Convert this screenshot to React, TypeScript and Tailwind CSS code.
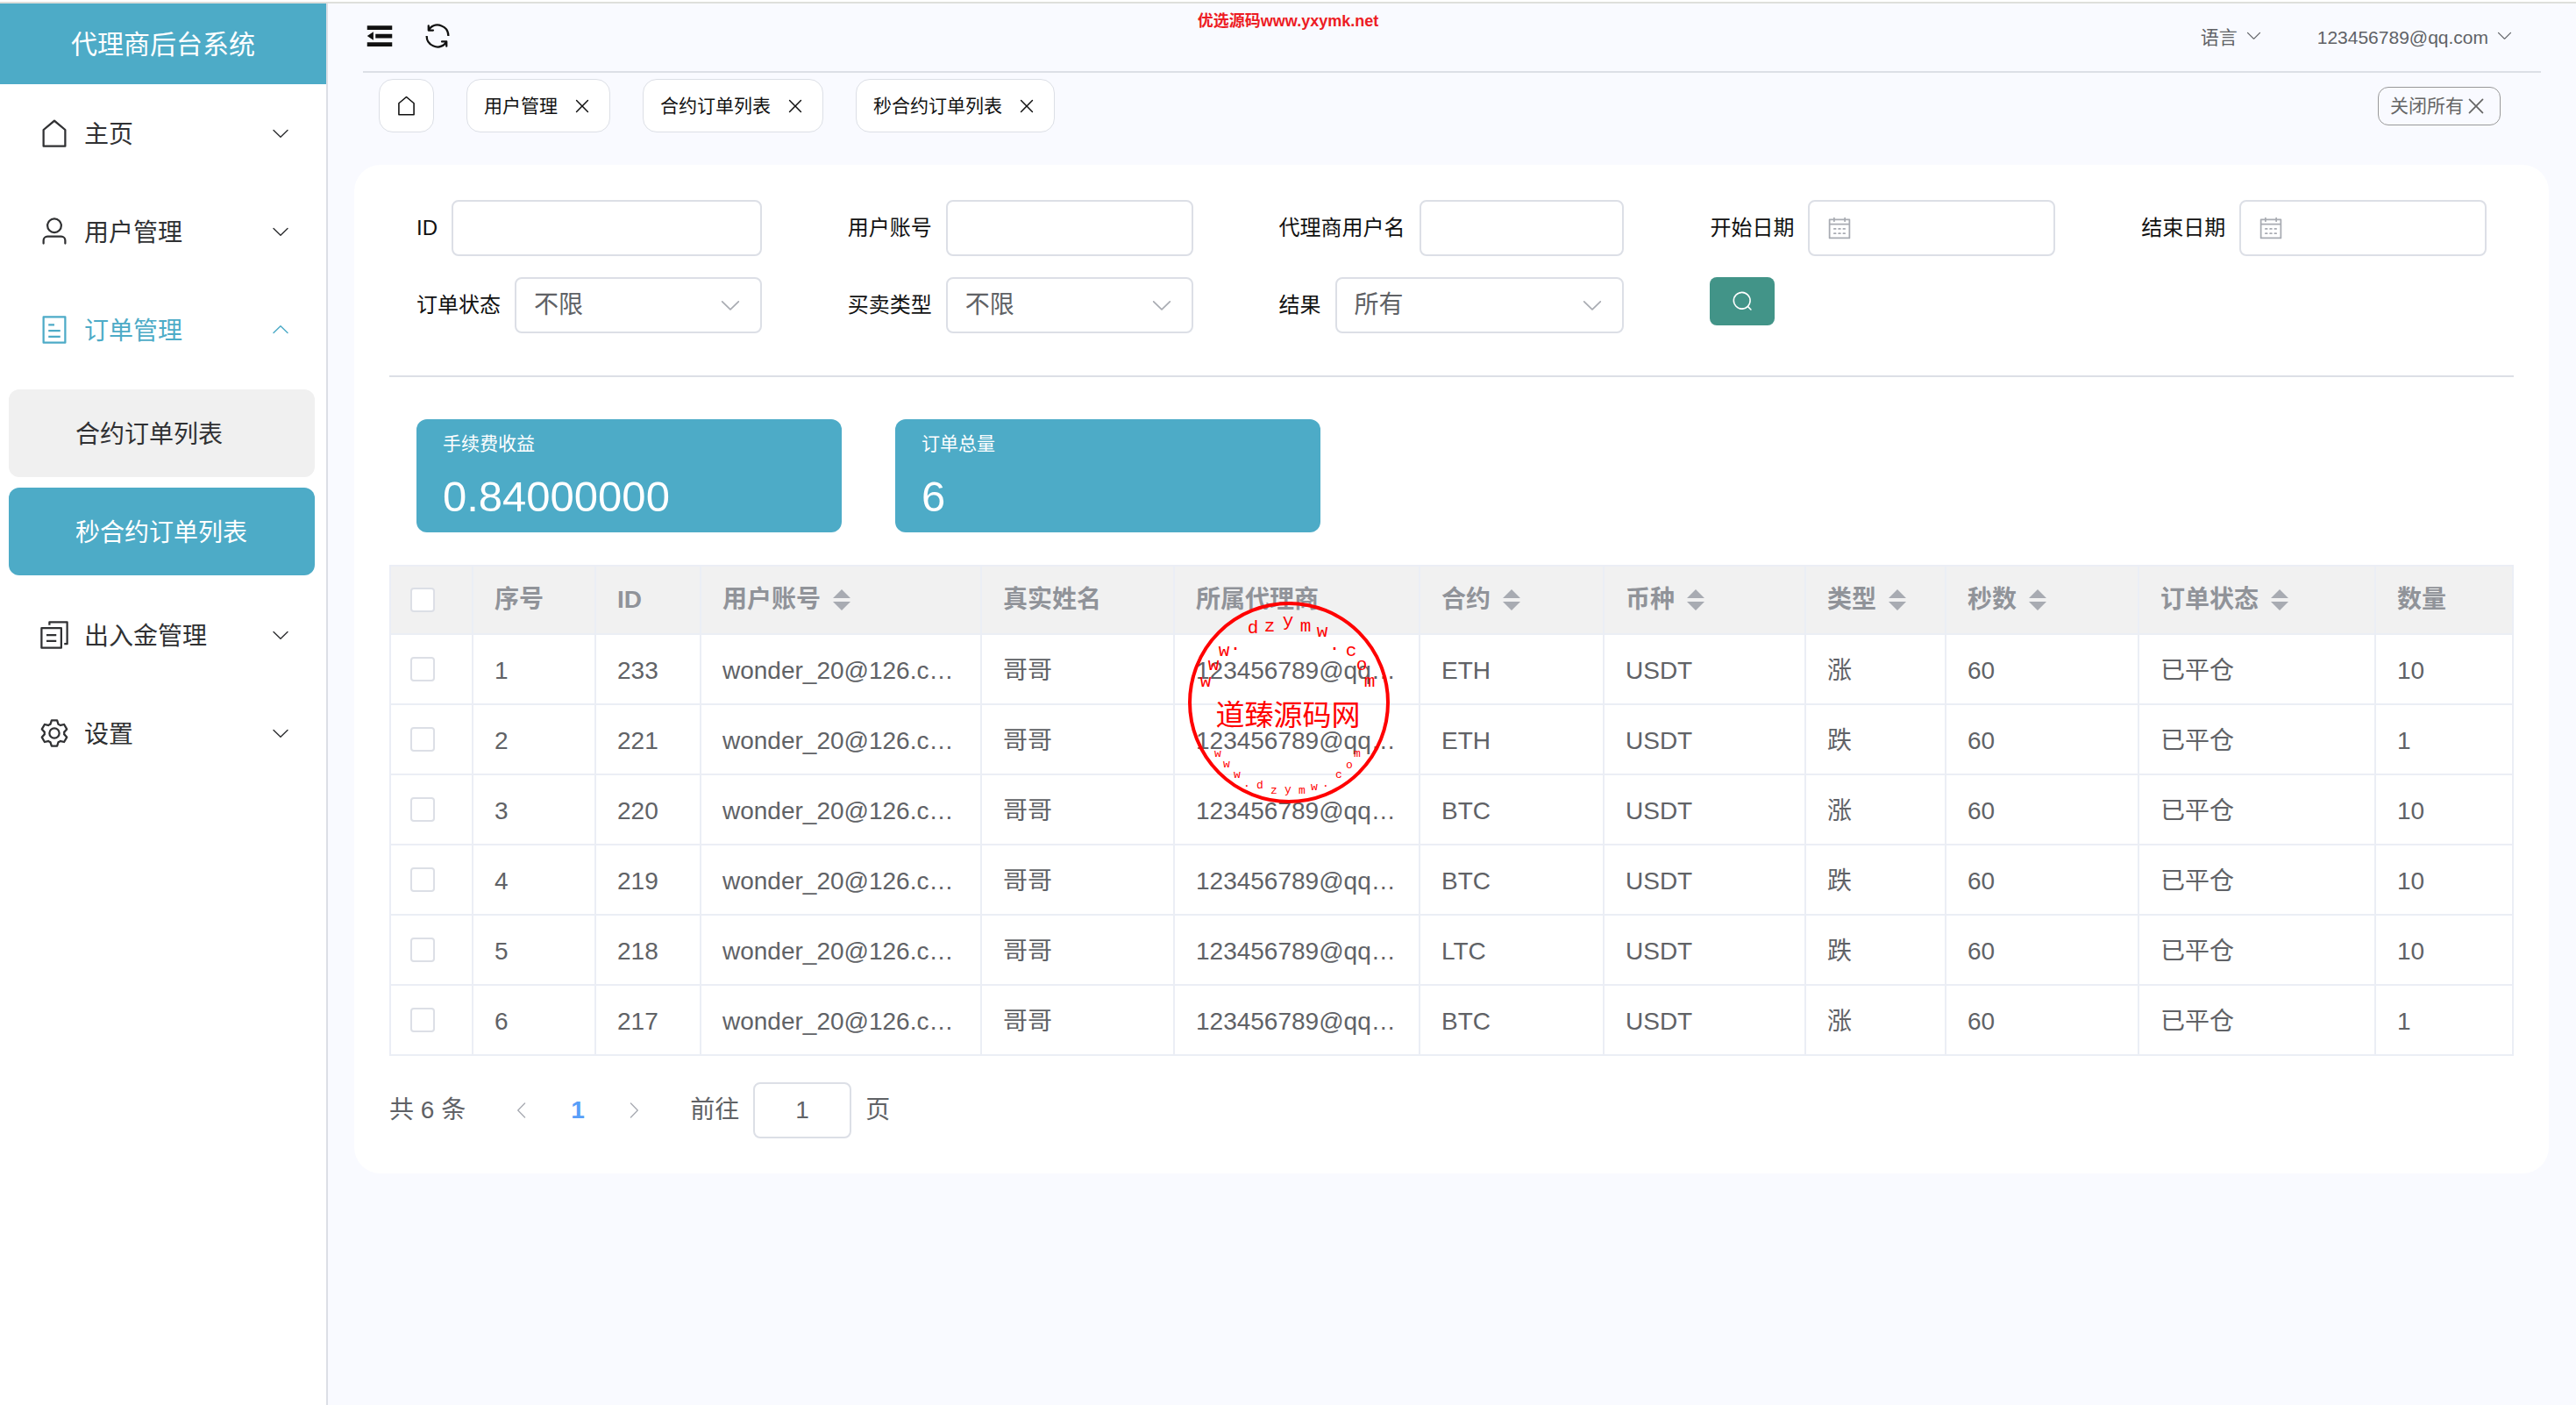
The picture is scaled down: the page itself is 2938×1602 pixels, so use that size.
import type { ReactNode } from 'react';

// Icon outlines, all on a 1024 grid.
const ICONS = {
  house:
    'M192 413.952V896h640V413.952L512 147.328zM139.52 374.4l352-293.312a32 32 0 0 1 40.96 0l352 293.312A32 32 0 0 1 896 398.976V928a32 32 0 0 1-32 32H160a32 32 0 0 1-32-32V398.976a32 32 0 0 1 11.52-24.576',
  user:
    'M512 512a192 192 0 1 0 0-384 192 192 0 0 0 0 384m0 64a256 256 0 1 1 0-512 256 256 0 0 1 0 512m320 320v-96a96 96 0 0 0-96-96H288a96 96 0 0 0-96 96v96a32 32 0 1 1-64 0v-96a160 160 0 0 1 160-160h448a160 160 0 0 1 160 160v96a32 32 0 1 1-64 0',
  tickets:
    'M192 128v768h640V128zm-32-64h704a32 32 0 0 1 32 32v832a32 32 0 0 1-32 32H160a32 32 0 0 1-32-32V96a32 32 0 0 1 32-32m160 448h384v64H320zm0-192h192v64H320zm0 384h384v64H320z',
  copy:
    'M128 320v576h576V320zm-32-64h640a32 32 0 0 1 32 32v640a32 32 0 0 1-32 32H96a32 32 0 0 1-32-32V288a32 32 0 0 1 32-32M960 96v704a32 32 0 0 1-32 32h-96v-64h64V128H384v64h-64V96a32 32 0 0 1 32-32h576a32 32 0 0 1 32 32M256 672h320v64H256zm0-192h320v64H256z',
  setting:
    'M600.704 64a32 32 0 0 1 30.464 22.208l35.2 109.376c14.784 7.232 28.928 15.36 42.432 24.512l112.384-24.192a32 32 0 0 1 34.432 15.36L944.32 364.8a32 32 0 0 1-4.032 37.504l-77.12 85.12a357.12 357.12 0 0 1 0 49.024l77.12 85.248a32 32 0 0 1 4.032 37.504l-88.704 153.6a32 32 0 0 1-34.432 15.296L708.8 803.904c-13.44 9.088-27.648 17.28-42.368 24.512l-35.264 109.376A32 32 0 0 1 600.704 960H423.296a32 32 0 0 1-30.464-22.208L357.696 828.48a351.616 351.616 0 0 1-42.56-24.64l-112.32 24.256a32 32 0 0 1-34.432-15.36L79.68 659.2a32 32 0 0 1 4.032-37.504l77.12-85.248a357.12 357.12 0 0 1 0-48.896l-77.12-85.248A32 32 0 0 1 79.68 364.8l88.704-153.6a32 32 0 0 1 34.432-15.296l112.32 24.256c13.568-9.152 27.776-17.408 42.56-24.64l35.2-109.312A32 32 0 0 1 423.232 64H600.64zm-23.424 64H446.72l-36.352 113.088-24.512 11.968a294.113 294.113 0 0 0-34.816 20.096l-22.656 15.36-116.224-25.088-65.28 113.152 79.68 88.192-1.92 27.136a293.12 293.12 0 0 0 0 40.192l1.92 27.136-79.808 88.192 65.344 113.152 116.224-25.024 22.656 15.296a294.113 294.113 0 0 0 34.816 20.096l24.512 11.968L446.72 896h130.688l36.48-113.152 24.448-11.904a288.282 288.282 0 0 0 34.752-20.096l22.592-15.296 116.288 25.024 65.28-113.152-79.744-88.192 1.92-27.136a293.12 293.12 0 0 0 0-40.256l-1.92-27.136 79.808-88.128-65.344-113.152-116.288 24.96-22.592-15.232a287.616 287.616 0 0 0-34.752-20.096l-24.448-11.904L577.344 128zM512 320a192 192 0 1 1 0 384 192 192 0 0 1 0-384m0 64a128 128 0 1 0 0 256 128 128 0 0 0 0-256',
  down:
    'M831.872 340.864 512 652.672 192.128 340.864a30.592 30.592 0 0 0-42.752 0 29.12 29.12 0 0 0 0 41.6L489.664 714.24a32 32 0 0 0 44.672 0l340.288-331.712a29.12 29.12 0 0 0 0-41.728 30.592 30.592 0 0 0-42.752 0z',
  close:
    'M764.288 214.592 512 466.88 259.712 214.592a31.936 31.936 0 0 0-45.12 45.12L466.752 512 214.528 764.224a31.936 31.936 0 1 0 45.12 45.184L512 557.184l252.288 252.288a31.936 31.936 0 0 0 45.12-45.12L557.12 512.064l252.288-252.352a31.936 31.936 0 1 0-45.12-45.184z',
  calendar:
    'M128 384v512h768V192H768v32a32 32 0 1 1-64 0v-32H320v32a32 32 0 0 1-64 0v-32H128v128h768v64zm192-256h384V96a32 32 0 1 1 64 0v32h160a32 32 0 0 1 32 32v768a32 32 0 0 1-32 32H96a32 32 0 0 1-32-32V160a32 32 0 0 1 32-32h160V96a32 32 0 0 1 64 0zm-32 384h64a32 32 0 0 1 0 64h-64a32 32 0 0 1 0-64m0 192h64a32 32 0 1 1 0 64h-64a32 32 0 1 1 0-64m192-192h64a32 32 0 0 1 0 64h-64a32 32 0 0 1 0-64m0 192h64a32 32 0 1 1 0 64h-64a32 32 0 1 1 0-64m192-192h64a32 32 0 1 1 0 64h-64a32 32 0 1 1 0-64m0 192h64a32 32 0 1 1 0 64h-64a32 32 0 1 1 0-64',
  search:
    'm795.904 750.72 124.992 124.928a32 32 0 0 1-45.248 45.248L750.656 795.904a416 416 0 1 1 45.248-45.248zM480 832a352 352 0 1 0 0-704 352 352 0 0 0 0 704',
  fold: 'M896 192H128v128h768zm0 256H384v128h512zm0 256H128v128h768zM320 384 128 512l192 128z',
  refresh:
    'M771.776 794.88A384 384 0 0 1 128 512h64a320 320 0 0 0 555.712 216.448H654.72a32 32 0 1 1 0-64h149.056a32 32 0 0 1 32 32v148.928a32 32 0 1 1-64 0v-50.56zM276.288 295.616h92.992a32 32 0 0 1 0 64H220.16a32 32 0 0 1-32-32V178.56a32 32 0 0 1 64 0v50.56A384 384 0 0 1 896.128 512h-64a320 320 0 0 0-555.776-216.384z',
} as const;

type IconName = keyof typeof ICONS;

function Icon({ name, className = '' }: { name: IconName; className?: string }) {
  return (
    <svg viewBox="0 0 1024 1024" fill="currentColor" className={`shrink-0 ${className}`} aria-hidden="true">
      <path d={ICONS[name]} />
    </svg>
  );
}

const TABS = ['用户管理', '合约订单列表', '秒合约订单列表'];

const ORDERS = [
  { no: 1, id: 233, pair: 'ETH', side: '涨', amount: 10 },
  { no: 2, id: 221, pair: 'ETH', side: '跌', amount: 1 },
  { no: 3, id: 220, pair: 'BTC', side: '涨', amount: 10 },
  { no: 4, id: 219, pair: 'BTC', side: '跌', amount: 10 },
  { no: 5, id: 218, pair: 'LTC', side: '跌', amount: 10 },
  { no: 6, id: 217, pair: 'BTC', side: '涨', amount: 1 },
];

const COLUMNS = [
  { label: '序号', width: 'w-[140px]' },
  { label: 'ID', width: 'w-[120px]' },
  { label: '用户账号', width: 'w-[320px]', sortable: true },
  { label: '真实姓名', width: 'w-[220px]' },
  { label: '所属代理商', width: 'w-[280px]' },
  { label: '合约', width: 'w-[210px]', sortable: true },
  { label: '币种', width: 'w-[230px]', sortable: true },
  { label: '类型', width: 'w-[160px]', sortable: true },
  { label: '秒数', width: 'w-[220px]', sortable: true },
  { label: '订单状态', width: 'w-[270px]', sortable: true },
  { label: '数量', width: '' },
];

// ---------- sidebar ----------

function MenuItem({ icon, label, open }: { icon: IconName; label: string; open?: boolean }) {
  return (
    <button
      type="button"
      aria-expanded={!!open}
      className={`flex h-28 w-full items-center pr-10 pl-[38px] text-[28px] ${open ? 'text-[#4dabc7]' : 'text-[#303133]'}`}
    >
      <span className="mr-2.5 flex w-12 justify-center">
        <Icon name={icon} className="size-9" />
      </span>
      <span className="pt-[3px]">{label}</span>
      <Icon name="down" className={`ml-auto size-6 ${open ? 'rotate-180' : ''}`} />
    </button>
  );
}

function Sidebar() {
  return (
    <aside className="flex w-[374px] shrink-0 flex-col border-r-2 border-[#dcdfe6] bg-white">
      <h1 className="flex h-[92px] items-center justify-center bg-[#4dabc7] text-[30px] text-white">代理商后台系统</h1>
      <nav aria-label="主菜单">
        <MenuItem icon="house" label="主页" />
        <MenuItem icon="user" label="用户管理" />
        <MenuItem icon="tickets" label="订单管理" open />
        <div className="flex flex-col gap-3 py-3 pr-[13px] pl-2.5 text-[28px]">
          <a
            href="#contract"
            className="flex h-[100px] items-center rounded-xl bg-[#f0f0f0] pt-[3px] pl-[76px] text-[#303133]"
          >
            合约订单列表
          </a>
          <a
            href="#seconds"
            aria-current="page"
            className="flex h-[100px] items-center rounded-xl bg-[#4dabc7] pt-[3px] pl-[76px] text-white"
          >
            秒合约订单列表
          </a>
        </div>
        <MenuItem icon="copy" label="出入金管理" />
        <MenuItem icon="setting" label="设置" />
      </nav>
    </aside>
  );
}

// ---------- top bar ----------

function TopBar() {
  return (
    <header className="mx-10 flex h-[79px] items-center border-b-2 border-[#dcdfe6] pb-1">
      <button type="button" aria-label="收起菜单" className="text-[#111]">
        <Icon name="fold" className="size-[38px]" />
      </button>
      <button type="button" aria-label="刷新" className="ml-[29px] text-[#111]">
        <Icon name="refresh" className="size-9" />
      </button>
      <div className="ml-auto flex items-center gap-[62px] pr-[31px] text-[21px] text-[#606266]">
        <button type="button" className="flex items-center gap-2">
          <span className="pt-1">语言</span>
          <Icon name="down" className="size-[21px]" />
        </button>
        <button type="button" className="flex items-center gap-2">
          <span className="pt-1">123456789@qq.com</span>
          <Icon name="down" className="size-[21px]" />
        </button>
      </div>
    </header>
  );
}

function TabBar() {
  return (
    <div className="mt-[7px] flex items-center gap-[37px] pr-[86px] pl-[58px] text-[21px] text-[#111]">
      <a
        href="#home"
        aria-label="主页"
        className="flex h-[61px] w-[63px] items-center justify-center rounded-2xl border border-[#dcdfe6] bg-white"
      >
        <Icon name="house" className="size-[25px]" />
      </a>
      {TABS.map((tab) => (
        <div key={tab} className="flex h-[61px] items-center gap-4 rounded-2xl border border-[#dcdfe6] bg-white px-[19px]">
          <a href="#tab">{tab}</a>
          <button type="button" aria-label={`关闭${tab}`}>
            <Icon name="close" className="size-6" />
          </button>
        </div>
      ))}
      <button
        type="button"
        className="ml-auto flex h-11 items-center rounded-xl border border-[#999] px-[13px] text-[#666]"
      >
        关闭所有
        <Icon name="close" className="size-7" />
      </button>
    </div>
  );
}

// ---------- filters ----------

function Field({ id, label, children }: { id: string; label: string; children: ReactNode }) {
  return (
    <div className="flex h-16 items-center gap-4">
      <label htmlFor={id} className="shrink-0 text-2xl text-[#111]">
        {label}
      </label>
      <div className="relative min-w-0 flex-1">{children}</div>
    </div>
  );
}

const INPUT_CLASS = 'block h-16 w-full rounded-lg border-2 border-[#dcdfe6] bg-white px-5 text-[28px] text-[#606266] outline-none';

function TextField({ id, label }: { id: string; label: string }) {
  return (
    <Field id={id} label={label}>
      <input id={id} type="text" className={INPUT_CLASS} />
    </Field>
  );
}

function DateField({ id, label }: { id: string; label: string }) {
  return (
    <Field id={id} label={label}>
      <input id={id} type="text" className={`${INPUT_CLASS} pl-16`} />
      <Icon name="calendar" className="pointer-events-none absolute top-[18px] left-[22px] size-7 text-[#a8abb2]" />
    </Field>
  );
}

function SelectField({ id, label, value }: { id: string; label: string; value: string }) {
  return (
    <Field id={id} label={label}>
      <select id={id} className={`${INPUT_CLASS} appearance-none`}>
        <option>{value}</option>
      </select>
      <Icon name="down" className="pointer-events-none absolute top-[18px] right-[22px] size-7 text-[#a8abb2]" />
    </Field>
  );
}

function Filters() {
  return (
    <form className="grid grid-cols-5 gap-x-[98px] gap-y-6 border-b-2 border-[#dcdfe6] px-[31px] pb-12">
      <TextField id="order-id" label="ID" />
      <TextField id="account" label="用户账号" />
      <TextField id="agent" label="代理商用户名" />
      <DateField id="start-date" label="开始日期" />
      <DateField id="end-date" label="结束日期" />
      <SelectField id="status" label="订单状态" value="不限" />
      <SelectField id="side" label="买卖类型" value="不限" />
      <SelectField id="result" label="结果" value="所有" />
      <button
        type="button"
        aria-label="搜索"
        className="flex h-[55px] w-[74px] items-center justify-center rounded-lg bg-[#429488] text-white"
      >
        <Icon name="search" className="size-[25px]" />
      </button>
    </form>
  );
}

function StatCard({ label, value }: { label: string; value: string }) {
  return (
    <div className="h-[129px] w-[485px] rounded-xl bg-[#4dabc7] px-[30px] pt-3.5 text-white">
      <div className="text-[21px] leading-7">{label}</div>
      <div className="mt-3 text-[49px] leading-[68px]">{value}</div>
    </div>
  );
}

// ---------- table ----------

const CELL = 'border-r-2 border-b-2 border-[#ebeef5]';

function SortCaret() {
  return (
    <span className="flex w-12 justify-center">
      <svg viewBox="0 0 20 24" className="h-6 w-5" fill="#a8abb2" aria-hidden="true">
        <path d="M10 0 20 10H0zM0 14h20L10 24z" />
      </svg>
    </span>
  );
}

function Checkbox({ label }: { label: string }) {
  return (
    <input
      type="checkbox"
      aria-label={label}
      className="block size-7 appearance-none rounded-sm border-2 border-[#dcdfe6] bg-white"
    />
  );
}

function OrdersTable() {
  return (
    <table className="w-full table-fixed border-separate border-spacing-0 border-t-2 border-l-2 border-[#ebeef5] text-[28px] text-[#606266]">
      <thead className="bg-[#f1f1f1] text-left text-[#909399]">
        <tr className="h-[78px]">
          <th className={`w-[94px] pl-[22px] ${CELL}`}>
            <Checkbox label="全选" />
          </th>
          {COLUMNS.map((col) => (
            <th key={col.label} className={`pl-6 font-bold whitespace-nowrap ${col.width} ${CELL}`}>
              <span className="flex items-center">
                {col.label}
                {col.sortable && <SortCaret />}
              </span>
            </th>
          ))}
        </tr>
      </thead>
      <tbody>
        {ORDERS.map((row) => (
          <tr key={row.id} className="h-20">
            <td className={`pl-[22px] ${CELL}`}>
              <Checkbox label={`选择 ${row.id}`} />
            </td>
            {[
              row.no,
              row.id,
              'wonder_20@126.c…',
              '哥哥',
              '123456789@qq…',
              row.pair,
              'USDT',
              row.side,
              60,
              '已平仓',
              row.amount,
            ].map((value, i) => (
              <td key={i} className={`pt-[3px] pl-6 whitespace-nowrap ${CELL}`}>
                {value}
              </td>
            ))}
          </tr>
        ))}
      </tbody>
    </table>
  );
}

function Pagination() {
  return (
    <div className="mt-[30px] flex h-16 items-center text-[28px] text-[#606266]">
      <span className="mr-8">共 6 条</span>
      <button type="button" aria-label="上一页" className="flex size-16 items-center justify-center text-[#a8abb2]">
        <Icon name="down" className="size-6 rotate-90" />
      </button>
      <button type="button" aria-current="page" className="size-16 font-bold text-[#589ef8]">
        1
      </button>
      <button type="button" aria-label="下一页" className="flex size-16 items-center justify-center text-[#a8abb2]">
        <Icon name="down" className="size-6 -rotate-90" />
      </button>
      <label htmlFor="goto" className="ml-8">
        前往
      </label>
      <input
        id="goto"
        type="text"
        defaultValue="1"
        className="mx-4 h-16 w-28 rounded-lg border-2 border-[#dcdfe6] bg-white text-center outline-none"
      />
      页
    </div>
  );
}

// ---------- stamp over the page ----------

const STAMP_TOP: [string, number, number][] = [
  ['w', 21, 97], ['w', 30, 78], ['w', 42, 62], ['·', 55, 59], ['d', 75, 36], ['z', 94, 34], ['y', 115, 28],
  ['m', 135, 34], ['w', 154, 40], ['·', 168, 59], ['c', 187, 62], ['o', 199, 78], ['m', 208, 97],
];

const STAMP_BOTTOM: [string, number, number][] = [
  ['w', 35, 177], ['w', 45, 189], ['w', 57, 201], ['.', 68, 211], ['d', 83, 213], ['z', 99, 219], ['y', 115, 218],
  ['m', 131, 219], ['w', 145, 215], ['.', 158, 211], ['c', 173, 201], ['o', 185, 190], ['m', 194, 177],
];

function Stamp() {
  return (
    <div className="pointer-events-none absolute inset-0 flex items-center justify-center">
      <svg viewBox="0 0 230 230" className="size-[230px] overflow-visible" fill="#f00" textAnchor="middle">
        <circle cx="116" cy="115" r="113" fill="none" stroke="#f00" strokeWidth="4" />
        <g className="font-['Liberation_Mono',monospace] text-[21px]">
          {STAMP_TOP.map(([ch, x, y], i) => (
            <text key={i} x={x} y={y}>
              {ch}
            </text>
          ))}
        </g>
        <text x="115" y="141" className="text-[33px]">
          道臻源码网
        </text>
        <g className="font-['Liberation_Mono',monospace] text-[13px]">
          {STAMP_BOTTOM.map(([ch, x, y], i) => (
            <text key={i} x={x} y={y}>
              {ch}
            </text>
          ))}
        </g>
      </svg>
    </div>
  );
}

export default function App() {
  return (
    <div className="relative flex min-h-screen flex-col bg-white pt-0.5 font-['Liberation_Sans','Noto_Sans_CJK_SC',sans-serif]">
      <div className="flex flex-1 border-t-2 border-[#dedfdb]">
        <Sidebar />
        <div className="min-w-0 flex-1 bg-[#f9faff]">
          <TopBar />
          <TabBar />
          <main className="mt-[37px] mr-[31px] ml-[30px] rounded-[30px] bg-white p-10">
            <Filters />
            <div className="mt-12 mb-[37px] flex gap-[61px] px-[31px]">
              <StatCard label="手续费收益" value="0.84000000" />
              <StatCard label="订单总量" value="6" />
            </div>
            <OrdersTable />
            <Pagination />
          </main>
        </div>
      </div>
      <div className="pointer-events-none absolute inset-x-0 top-3 text-center text-lg leading-6 font-bold text-[#ed1c24]">
        优选源码www.yxymk.net
      </div>
      <Stamp />
    </div>
  );
}
